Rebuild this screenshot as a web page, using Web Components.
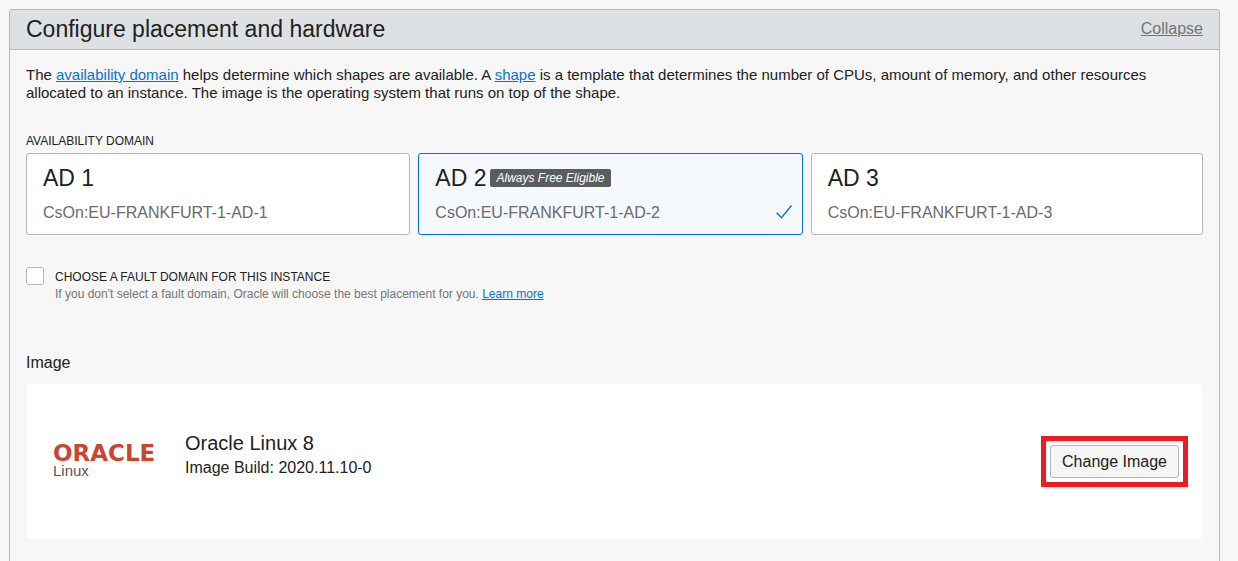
<!DOCTYPE html>
<html lang="en">
<head>
<meta charset="utf-8">
<title>Configure placement and hardware</title>
<style>
body { margin: 9px 18px 0 9px; background: #f7f7f7; color: #212121; font: 16px/18px "Liberation Sans", Arial, sans-serif; overflow: hidden; }
a { color: #0572ce; }
p { margin: 0; font-size: 15px; }
</style>
</head>
<body>
<config-panel heading="Configure placement and hardware">
  <p>The <a href="#domain">availability domain</a> helps determine which shapes are available. A <a href="#shape">shape</a> is a template that determines the number of CPUs, amount of memory, and other resources allocated to an instance. The image is the operating system that runs on top of the shape.</p>
  <domain-picker label="Availability domain">
    <domain-card name="AD 1" code="CsOn:EU-FRANKFURT-1-AD-1"></domain-card>
    <domain-card name="AD 2" code="CsOn:EU-FRANKFURT-1-AD-2" badge="Always Free Eligible" selected></domain-card>
    <domain-card name="AD 3" code="CsOn:EU-FRANKFURT-1-AD-3"></domain-card>
  </domain-picker>
  <option-check label="Choose a fault domain for this instance">If you don't select a fault domain, Oracle will choose the best placement for you. <a href="#more">Learn more</a></option-check>
  <image-section heading="Image" name="Oracle Linux 8" build="Image Build: 2020.11.10-0">
    <oracle-logo slot="logo"></oracle-logo>
  </image-section>
</config-panel>
<script>
class Base extends HTMLElement {
  connectedCallback() {
    if (!this.shadowRoot) this.attachShadow({ mode: "open" }).innerHTML = this.view();
  }
  at(name) { return this.getAttribute(name) || ""; }
}

customElements.define("config-panel", class extends Base {
  view() {
    return `<style>
      :host { display: block; border: 1px solid #b3b8be; border-radius: 3px 3px 0 0; }
      header { display: flex; align-items: center; justify-content: space-between; min-height: 37px; padding: 0 16px 2px; background: #dee1e3; border-bottom: 1px solid #b3b8be; border-radius: 2px 2px 0 0; }
      h2 { margin: 0; font-size: 23px; line-height: 28px; font-weight: 400; }
      a { color: #757575; }
      .body { padding: 16px 16px 48px; }
    </style>
    <header><h2>${this.at("heading")}</h2><a href="#collapse">Collapse</a></header>
    <div class="body"><slot></slot></div>`;
  }
});

customElements.define("domain-picker", class extends Base {
  view() {
    return `<style>
      :host { display: block; margin-top: 31px; }
      .label { font-size: 12px; line-height: 16px; text-transform: uppercase; }
      .cards { display: grid; grid-template-columns: repeat(3, 1fr); margin-top: 4px; }
      ::slotted(:not(:last-child)) { margin-right: 8px; }
    </style>
    <div class="label" id="l">${this.at("label")}</div>
    <div class="cards" role="group" aria-labelledby="l"><slot></slot></div>`;
  }
});

customElements.define("domain-card", class extends Base {
  view() {
    const on = this.hasAttribute("selected");
    const badge = this.at("badge");
    return `<style>
      :host { display: block; }
      button { display: flex; align-items: flex-end; justify-content: space-between; box-sizing: border-box; width: 100%; padding: 10px 8px 12px 16px; border: 1px solid #b3b8be; border-radius: 3px; background: #fff; color: inherit; font: inherit; text-align: left; }
      button[aria-pressed=true] { border-color: #0572ce; background: #f5f9fd; }
      .name { display: flex; align-items: center; gap: 4px; font-size: 23px; line-height: 28px; }
      .badge { padding: 0 6px; border-radius: 2px; background: #5a5d5f; color: #fff; font-size: 12px; line-height: 18px; font-style: italic; }
      .code { display: block; margin-top: 12px; color: #6b6b6b; line-height: 18px; }
    </style>
    <button type="button" aria-pressed="${on}">
      <span><span class="name">${this.at("name")}${badge ? `<span class="badge">${badge}</span>` : ""}</span>
      <span class="code">${this.at("code")}</span></span>
      ${on ? `<svg width="18" height="18" fill="none" stroke="#0572ce" stroke-width="1.4" aria-hidden="true"><path d="M.7 8.8 5.5 13.7 15.5 1.5"/></svg>` : ""}
    </button>`;
  }
});

customElements.define("option-check", class extends Base {
  view() {
    return `<style>
      :host { display: grid; grid-template-columns: 18px 1fr; column-gap: 11px; margin-top: 32px; font-size: 12px; }
      input { appearance: none; width: 18px; height: 18px; margin: 0; border: 1px solid #b3b8be; border-radius: 3px; background: #fff; }
      input:checked { background: #0572ce; }
      label { line-height: 20px; text-transform: uppercase; }
      .hint { grid-column: 2; color: #757575; line-height: 14px; }
    </style>
    <input type="checkbox" id="c" aria-describedby="h">
    <label for="c">${this.at("label")}</label>
    <div class="hint" id="h"><slot></slot></div>`;
  }
});

customElements.define("image-section", class extends Base {
  view() {
    return `<style>
      :host { display: block; margin-top: 53px; }
      h3 { margin: 0; font-size: 16px; line-height: 18px; font-weight: 400; }
      .card { display: flex; align-items: flex-end; gap: 26px; margin: 12px 1px 0; padding: 46px 23px 60px 26px; background: #fff; border-radius: 2px; }
      .text { flex: 1; }
      .name { font-size: 20px; line-height: 27px; }
      .build { line-height: 22px; }
      .mark { margin: -9px -9px -8px; padding: 4px; border: 5px solid #ed1c24; }
      button { display: block; padding: 0 11px; border: 1px solid #b3b8be; border-radius: 3px; background: #f5f5f5; color: inherit; font: inherit; line-height: 31px; }
    </style>
    <h3>${this.at("heading")}</h3>
    <div class="card">
      <slot name="logo"></slot>
      <div class="text"><div class="name">${this.at("name")}</div><div class="build">${this.at("build")}</div></div>
      <div class="mark"><button type="button">Change Image</button></div>
    </div>`;
  }
});

customElements.define("oracle-logo", class extends Base {
  view() {
    return `<style>
      :host { display: block; width: 106px; white-space: nowrap; }
      .brand { color: #c74634; font: 23px/20px "DejaVu Sans", sans-serif; font-weight: 700; }
      .product { color: #5a5652; font-size: 15px; line-height: 16px; }
    </style>
    <div class="brand">ORACLE</div>
    <div class="product">Linux</div>`;
  }
});
</script>
</body>
</html>
